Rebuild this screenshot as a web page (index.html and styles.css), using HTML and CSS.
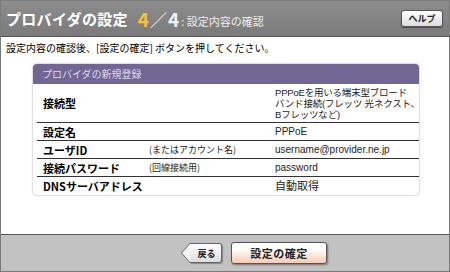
FILE: index.html
```html
<!DOCTYPE html>
<html lang="ja">
<head>
<meta charset="utf-8">
<link rel="stylesheet" href="styles.css">
</head>
<body>
<div class="frame">
  <header class="head">
    <h1 class="title">プロバイダの設定</h1>
    <span class="step"><span class="cur">4</span><span class="sep">／</span>4</span>
    <span class="sub">: 設定内容の確認</span>
    <button class="help">ヘルプ</button>
  </header>
  <main class="body">
    <p class="lead">設定内容の確認後、[設定の確定] ボタンを押してください。</p>
    <section class="panel">
      <div class="panel-head">プロバイダの新規登録</div>
      <div class="row tall">
        <div class="lbl">接続型</div>
        <div class="note"></div>
        <div class="val">PPPoEを用いる端末型ブロード<br>バンド接続(フレッツ 光ネクスト、<br>Bフレッツなど)</div>
      </div>
      <div class="row">
        <div class="lbl">設定名</div>
        <div class="note"></div>
        <div class="val">PPPoE</div>
      </div>
      <div class="row">
        <div class="lbl">ユーザID</div>
        <div class="note">(またはアカウント名)</div>
        <div class="val">username@provider.ne.jp</div>
      </div>
      <div class="row">
        <div class="lbl">接続パスワード</div>
        <div class="note">(回線接続用)</div>
        <div class="val">password</div>
      </div>
      <div class="row last">
        <div class="lbl">DNSサーバアドレス</div>
        <div class="note"></div>
        <div class="val big">自動取得</div>
      </div>
    </section>
  </main>
  <footer class="foot">
    <button class="back"><span>戻る</span></button>
    <button class="ok">設定の確定</button>
  </footer>
</div>
</body>
</html>
```
FILE: styles.css
```css
* { box-sizing: border-box; }
html, body { margin: 0; padding: 0; background: #fff; }
body { font-family: "Noto Sans CJK JP", "Liberation Sans", sans-serif; color: #000; }
.frame {
  width: 450px; height: 272px;
  border: 1px solid #7a7a7a;
  display: flex; flex-direction: column;
}
.head {
  height: 36px;
  background: linear-gradient(#8c8c8c, #7b7b7b);
  border-bottom: 1px solid #555;
  display: flex; align-items: center;
  padding: 0 6px 0 5px;
  color: #fff;
}
.title {
  margin: 0; font-size: 15px; font-weight: bold; letter-spacing: 0.3px;
  line-height: 1;
}
.step { margin-left: 10px; font-size: 19px; font-weight: bold; line-height: 1; color: #f2f2f2; }
.cur { color: #f5c23a; }
.sep { font-weight: normal; font-size: 17px; margin: 0 1px; }
.sub { margin-left: 2px; font-size: 11px; color: #eee; margin-top: 4px; }
.help {
  margin-left: auto;
  width: 42px; height: 17px; padding: 0;
  font: bold 9px "Noto Sans CJK JP", sans-serif; color: #222;
  background: linear-gradient(#ffffff, #dcdcdc);
  border: 1px solid #555; border-radius: 3px;
  box-shadow: 0 1px 1px rgba(0,0,0,0.4);
}
.body { flex: 1; padding: 4px 0 0 0; }
.lead { margin: 0 0 9px 5px; font-size: 10px; line-height: 14px; }
.panel {
  margin-left: 32px; width: 386px;
  border-radius: 4px;
  background: #fff;
  box-shadow: 0 0 2px rgba(0,0,0,0.45);
  overflow: hidden;
}
.panel-head {
  height: 20px; background: #716694;
  color: #ddd8ec; font-size: 10px; line-height: 20px; padding-left: 9px;
}
.row {
  display: flex; align-items: center;
  height: 18px; border-bottom: 1px solid #333;
  margin: 0 0 0 4px;
  font-size: 10px;
}
.row.tall { height: 39px; }
.row.last { border-bottom: none; height: 18px; }
.lbl { width: 112px; flex-shrink: 0; padding-left: 6px; font-weight: bold; font-size: 11px; }
.note { width: 126px; flex-shrink: 0; font-size: 9px; color: #222; }
.val {
  flex: 1; min-width: 0; line-height: 11px; color: #222; white-space: nowrap;
  font-family: "Liberation Sans", "Noto Sans CJK JP", sans-serif;
}
.row.tall .val { font-size: 9.5px; letter-spacing: -0.2px; }
.val.big { font-size: 11px; }
.foot {
  height: 37px; background: #c2c2c2;
  border-top: 1px solid #555;
  display: flex; align-items: center; justify-content: center;
  gap: 9px; padding-left: 67px;
}
.back {
  position: relative;
  width: 32px; height: 20px; padding: 0 0 0 2px;
  font: bold 9px "Noto Sans CJK JP", sans-serif; color: #222;
  background: linear-gradient(#ffffff, #dedede);
  border: 1px solid #666; border-left: none; border-radius: 0 3px 3px 0;
  box-shadow: 1px 1px 1px rgba(0,0,0,0.3);
}
.back::before {
  content: ""; position: absolute; left: -9px; top: -1px;
  width: 0; height: 0;
  border-top: 10px solid transparent; border-bottom: 10px solid transparent;
  border-right: 9px solid #666;
}
.back::after {
  content: ""; position: absolute; left: -8px; top: 0;
  width: 0; height: 0;
  border-top: 9px solid transparent; border-bottom: 9px solid transparent;
  border-right: 8px solid #f4f4f4;
}
.ok {
  width: 96px; height: 22px; padding: 0;
  font: bold 11px "Noto Sans CJK JP", sans-serif; color: #222; letter-spacing: 0.5px;
  background: linear-gradient(#ffffff 30%, #f6cbb4);
  border: 1px solid #555; border-radius: 3px;
  box-shadow: 1px 1px 2px rgba(0,0,0,0.4);
}
```
